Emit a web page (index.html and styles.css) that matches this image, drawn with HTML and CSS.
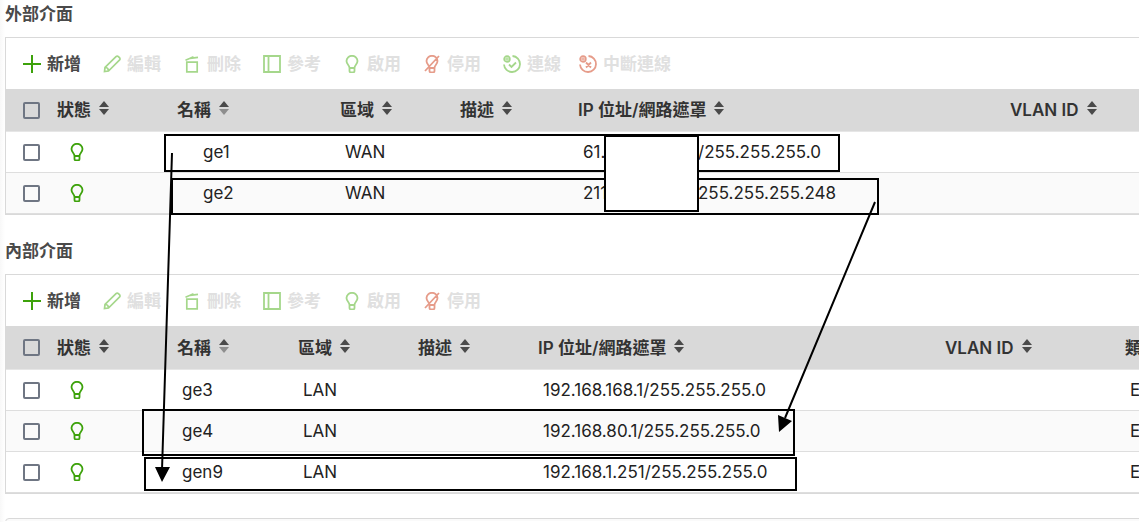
FILE: index.html
```html
<!DOCTYPE html>
<html lang="zh-Hant">
<head>
    <meta charset="UTF-8">
    <meta name="viewport" content="width=device-width, initial-scale=1.0">
    <title>介面</title>
    <link rel="stylesheet" href="styles.css">
</head>
<body>

    <!-- shared icons -->
    <svg class="icon-defs" aria-hidden="true">
        <symbol id="i-plus" viewBox="0 0 18 18"><path d="M9 0v18M0 9h18" stroke-width="2"/></symbol>
        <symbol id="i-pencil" viewBox="0 0 18 18"><path d="M1.500 16.500L2 12.500 13 1.700q1.200-1.200 2.400 0l1 1q1.200 1.200 0 2.400L5.500 16zM2.500 12.500q2.500 0 3 3" stroke-width="1.700"/></symbol>
        <symbol id="i-trash" viewBox="0 0 18 18"><path d="M3.800 7.200h10.400v9.600H3.800zM2.500 5.200L7 3.300l8-1M6.500 3.500l4-1.800" stroke-width="1.700"/></symbol>
        <symbol id="i-book" viewBox="0 0 18 18"><path d="M1 1h16v16H1zM5.500 1v16" stroke-width="1.800"/></symbol>
        <symbol id="i-bulb" viewBox="0 0 18 18"><path d="M6.500 13C6.500 10 3.500 9.500 3.500 6a5.500 5.200 0 0 1 11 0c0 3.500-3 4-3 7zM6.500 13v3q0 1.300 1.200 1.300h2.600q1.200 0 1.200-1.300v-3"/></symbol>
        <symbol id="i-bulb-off" viewBox="0 0 18 18"><path d="M6.500 13C6.500 10 3.500 9.500 3.500 6a5.500 5.200 0 0 1 11 0c0 3.500-3 4-3 7zM6.500 13v3q0 1.300 1.200 1.300h2.600q1.200 0 1.200-1.300v-3M16 1L2 16"/></symbol>
        <symbol id="i-link" viewBox="0 0 18 18"><path d="M9.500 1A8 8 0 1 1 1 9.500M6 9.500l2.500 2.500 4.500-4.500"/><circle cx="4" cy="4" r="2.800"/><path d="M1 4h6M4 1v6" stroke-width="1"/></symbol>
        <symbol id="i-unlink" viewBox="0 0 18 18"><path d="M9.500 1A8 8 0 1 1 1 9.500M7 7.500l5 5M12 7.500l-5 5"/><circle cx="4" cy="4" r="2.800"/><path d="M1 4h6M4 1v6" stroke-width="1"/></symbol>
        <symbol id="i-sort" viewBox="0 0 10 14"><path class="up" d="M5 0l5 6H0z"/><path class="down" d="M0 8h10l-5 6z"/></symbol>
        <symbol id="i-sort-asc" viewBox="0 0 10 14"><path class="up" d="M5 0l5 6H0z"/><path class="down-off" d="M0 8h10l-5 6z"/></symbol>
    </svg>

    <main class="page">
        <section class="section">
            <h2 class="title">外部介面</h2>
            <div class="panel">
                <div class="toolbar">
                    <button class="tool"><svg class="icon"><use href="#i-plus"/></svg>新增</button>
                    <button class="tool" disabled><svg class="icon"><use href="#i-pencil"/></svg>編輯</button>
                    <button class="tool" disabled><svg class="icon"><use href="#i-trash"/></svg>刪除</button>
                    <button class="tool" disabled><svg class="icon"><use href="#i-book"/></svg>參考</button>
                    <button class="tool" disabled><svg class="icon"><use href="#i-bulb"/></svg>啟用</button>
                    <button class="tool" disabled><svg class="icon red"><use href="#i-bulb-off"/></svg>停用</button>
                    <div class="tool-group">
                        <button class="tool" disabled><svg class="icon"><use href="#i-link"/></svg>連線</button>
                        <button class="tool" disabled><svg class="icon red"><use href="#i-unlink"/></svg>中斷連線</button>
                    </div>
                </div>
                <table class="grid grid-external">
                    <colgroup>
                        <col class="c-check"><col class="c-status"><col class="c-name"><col class="c-zone"><col class="c-desc"><col class="c-ip"><col>
                    </colgroup>
                    <thead>
                        <tr>
                            <th class="check"><input type="checkbox" aria-label="全選"></th>
                            <th><button class="sort">狀態<svg class="arrows"><use href="#i-sort"/></svg></button></th>
                            <th><button class="sort">名稱<svg class="arrows"><use href="#i-sort-asc"/></svg></button></th>
                            <th><button class="sort">區域<svg class="arrows"><use href="#i-sort"/></svg></button></th>
                            <th><button class="sort">描述<svg class="arrows"><use href="#i-sort"/></svg></button></th>
                            <th><button class="sort">IP 位址/網路遮罩<svg class="arrows"><use href="#i-sort"/></svg></button></th>
                            <th><button class="sort">VLAN ID<svg class="arrows"><use href="#i-sort"/></svg></button></th>
                        </tr>
                    </thead>
                    <tbody>
                        <tr>
                            <td class="check"><input type="checkbox" aria-label="ge1"></td>
                            <td class="status"><svg class="icon"><use href="#i-bulb"/></svg></td>
                            <td class="name">ge1</td>
                            <td>WAN</td>
                            <td></td>
                            <td><span class="ip-head">61.</span>/255.255.255.0</td>
                            <td></td>
                        </tr>
                        <tr>
                            <td class="check"><input type="checkbox" aria-label="ge2"></td>
                            <td class="status"><svg class="icon"><use href="#i-bulb"/></svg></td>
                            <td class="name">ge2</td>
                            <td>WAN</td>
                            <td></td>
                            <td><span class="ip-head">211</span>255.255.255.248</td>
                            <td></td>
                        </tr>
                    </tbody>
                </table>
            </div>
        </section>

        <section class="section">
            <h2 class="title">內部介面</h2>
            <div class="panel">
                <div class="toolbar">
                    <button class="tool"><svg class="icon"><use href="#i-plus"/></svg>新增</button>
                    <button class="tool" disabled><svg class="icon"><use href="#i-pencil"/></svg>編輯</button>
                    <button class="tool" disabled><svg class="icon"><use href="#i-trash"/></svg>刪除</button>
                    <button class="tool" disabled><svg class="icon"><use href="#i-book"/></svg>參考</button>
                    <button class="tool" disabled><svg class="icon"><use href="#i-bulb"/></svg>啟用</button>
                    <button class="tool" disabled><svg class="icon red"><use href="#i-bulb-off"/></svg>停用</button>
                </div>
                <table class="grid grid-internal">
                    <colgroup>
                        <col class="c-check"><col class="c-status"><col class="c-name"><col class="c-zone"><col class="c-desc"><col class="c-ip"><col class="c-vlan"><col>
                    </colgroup>
                    <thead>
                        <tr>
                            <th class="check"><input type="checkbox" aria-label="全選"></th>
                            <th><button class="sort">狀態<svg class="arrows"><use href="#i-sort"/></svg></button></th>
                            <th><button class="sort">名稱<svg class="arrows"><use href="#i-sort-asc"/></svg></button></th>
                            <th><button class="sort">區域<svg class="arrows"><use href="#i-sort"/></svg></button></th>
                            <th><button class="sort">描述<svg class="arrows"><use href="#i-sort"/></svg></button></th>
                            <th><button class="sort">IP 位址/網路遮罩<svg class="arrows"><use href="#i-sort"/></svg></button></th>
                            <th><button class="sort">VLAN ID<svg class="arrows"><use href="#i-sort"/></svg></button></th>
                            <th><button class="sort">類</button></th>
                        </tr>
                    </thead>
                    <tbody>
                        <tr>
                            <td class="check"><input type="checkbox" aria-label="ge3"></td>
                            <td class="status"><svg class="icon"><use href="#i-bulb"/></svg></td>
                            <td>ge3</td>
                            <td>LAN</td>
                            <td></td>
                            <td>192.168.168.1/255.255.255.0</td>
                            <td></td>
                            <td>E</td>
                        </tr>
                        <tr>
                            <td class="check"><input type="checkbox" aria-label="ge4"></td>
                            <td class="status"><svg class="icon"><use href="#i-bulb"/></svg></td>
                            <td>ge4</td>
                            <td>LAN</td>
                            <td></td>
                            <td>192.168.80.1/255.255.255.0</td>
                            <td></td>
                            <td>E</td>
                        </tr>
                        <tr>
                            <td class="check"><input type="checkbox" aria-label="gen9"></td>
                            <td class="status"><svg class="icon"><use href="#i-bulb"/></svg></td>
                            <td>gen9</td>
                            <td>LAN</td>
                            <td></td>
                            <td>192.168.1.251/255.255.255.0</td>
                            <td></td>
                            <td>E</td>
                        </tr>
                    </tbody>
                </table>
            </div>
        </section>

        <section class="panel panel-next"></section>

        <!-- hand-drawn marks over the tables -->
        <svg class="marks" width="900" height="500" aria-hidden="true">
            <rect x="165" y="135" width="674" height="36"/>
            <rect x="172" y="179" width="706" height="35"/>
            <rect class="mask" x="605" y="136" width="93" height="75"/>
            <rect x="143" y="410" width="651" height="45"/>
            <rect x="145" y="458" width="651" height="32"/>
            <path d="M172 153L162 470M875 202L785 418"/>
            <path class="head" d="M155 467h15l-8 15zM778 415l14 6-13 11z"/>
        </svg>
    </main>

</body>
</html>
```
FILE: styles.css
```css
* {
    box-sizing: border-box;
}
body {
    margin: 0;
    font-family: Inter, "Noto Sans CJK TC", sans-serif;
    font-size: 17px;
    line-height: 24px;
    color: #222;
    background: linear-gradient(to right, #f8f8f8, #fff 5px);
}
.icon-defs {
    display: none;
}
.page {
    position: relative;
    padding: 2px 0 0 5px;
    overflow: hidden;
}
.section {
    margin-bottom: 24px;
}
.title {
    margin: 0 0 11px;
    font-size: 17px;
    font-weight: 600;
    color: #4a4a4a;
}
/* the tables run on past the right edge of the window */
.panel {
    margin-right: -260px;
    border: 1px solid #d9d9d9;
    background: #fff;
}
.panel-next {
    height: 40px;
    margin-bottom: -37px;
    border-radius: 4px;
    background: #fafafa;
}

/* toolbar */
.toolbar {
    display: flex;
    gap: 22px;
    height: 51px;
    padding-left: 17px;
}
.tool-group {
    display: flex;
    gap: 18px;
}
.tool {
    display: flex;
    align-items: center;
    gap: 6px;
    padding: 0;
    border: none;
    background: none;
    font: inherit;
    font-weight: 600;
    color: #4a4a4a;
    cursor: pointer;
}
.tool:disabled {
    color: #e0e0e0;
    cursor: default;
}
.icon {
    display: block;
    width: 18px;
    height: 18px;
    fill: none;
    stroke: #3da20b;
    stroke-width: 1.8;
}
.tool:disabled .icon {
    stroke: #a5d78b;
}
.tool:disabled .icon.red {
    stroke: #e69c8a;
}

/* tables */
.grid {
    width: 100%;
    table-layout: fixed;
    border-collapse: separate;
    border-spacing: 0;
}
.c-check { width: 51px; }
.c-status { width: 120px; }
.c-name { width: 163px; }
.c-zone { width: 120px; }
.c-desc { width: 118px; }
.c-ip { width: 432px; }
.grid-internal .c-name { width: 121px; }
.grid-internal .c-desc { width: 120px; }
.grid-internal .c-ip { width: 407px; }
.c-vlan { width: 180px; }
th, td {
    padding: 0;
    text-align: left;
    white-space: nowrap;
    border-bottom: 1px solid #dedede;
}
th {
    height: 43px;
    background: #d9d9d9;
    border-bottom-color: #e6e6e6;
}
.grid-internal th {
    height: 44px;
}
td {
    height: 41px;
    padding-left: 5px;
}
tbody tr:nth-child(even) {
    background: #fafafa;
}
.check {
    padding-left: 17px;
}
.status {
    padding-left: 11px;
}
.grid-external .name {
    padding-left: 26px;
}
.sort {
    display: flex;
    align-items: center;
    gap: 8px;
    padding: 0;
    border: none;
    background: none;
    font: inherit;
    font-weight: 600;
    color: #333;
    cursor: pointer;
}
.arrows {
    width: 10px;
    height: 14px;
    margin-bottom: 4px;
}
.up, .down {
    fill: #4a4a4a;
}
.down-off {
    fill: #8e8e8e;
}
input[type="checkbox"] {
    appearance: none;
    display: block;
    width: 17px;
    height: 17px;
    margin: 0;
    border: 2px solid #6f7683;
    border-radius: 2px;
}
.ip-head {
    display: inline-block;
    width: 115px;
}

.marks {
    position: absolute;
    top: 0;
    left: 0;
    fill: none;
    stroke: #000;
    stroke-width: 2;
    pointer-events: none;
}
.mask {
    fill: #fff;
}
.head {
    fill: #000;
    stroke: none;
}
```
